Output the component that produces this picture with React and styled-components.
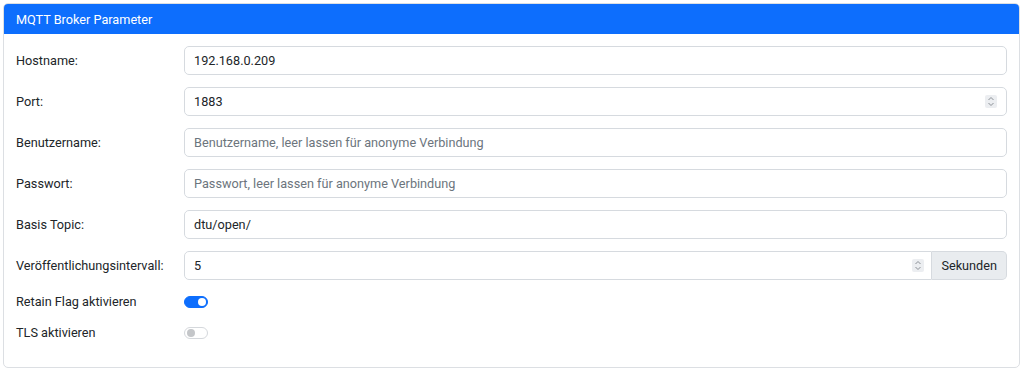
import React from "react";
import styled, { createGlobalStyle } from "styled-components";

const Global = createGlobalStyle`
  html, body { margin: 0; padding: 0; background: #fff; }
  body { font-family: Roboto, "Noto Sans", sans-serif; color: #212529; }
  * { box-sizing: border-box; }
`;

const Page = styled.div`
  padding: 3px 4px 4px 3px;
`;

const Card = styled.section`
  border: 1px solid #dcdfe3;
  border-radius: 5px;
  overflow: hidden;
`;

const Header = styled.header`
  background: #0d6efd;
  color: #fff;
  font-size: 12.7px;
  height: 30px;
  display: flex;
  align-items: center;
  padding: 0 12px;
`;

const Body = styled.div`
  padding: 12px 12px 13px 12px;
  display: flex;
  flex-direction: column;
`;

const Row = styled.div`
  display: grid;
  grid-template-columns: 168px 1fr;
  align-items: center;
  margin-bottom: 12px;
  min-height: ${(p) => (p.$switch ? "19px" : "29px")};
`;

const Label = styled.label`
  font-size: 12.7px;
  color: #212529;
`;

const Group = styled.div`
  display: flex;
  position: relative;
`;

const Input = styled.input`
  flex: 1;
  min-width: 0;
  height: 29px;
  border: 1px solid #d6dadf;
  border-radius: ${(p) => (p.$joined ? "5px 0 0 5px" : "5px")};
  padding: 0 9px;
  font: inherit;
  font-size: 12.7px;
  color: #212529;
  background: #fff;
  outline: none;
  &::placeholder { color: #6c757d; opacity: 1; }
`;

const Addon = styled.span`
  display: flex;
  align-items: center;
  height: 29px;
  padding: 0 9px;
  background: #e9ecef;
  border: 1px solid #d6dadf;
  border-left: none;
  border-radius: 0 5px 5px 0;
  font-size: 12.7px;
  color: #212529;
`;

const Spinner = styled.span`
  position: absolute;
  right: ${(p) => (p.$offset ? "83px" : "10px")};
  top: 8px;
  width: 12px;
  height: 13px;
  border-radius: 2px;
  background: #eceef1;
  display: flex;
  align-items: center;
  justify-content: center;
`;

const Switch = styled.span`
  width: 24px;
  height: 12px;
  border-radius: 6px;
  border: 1px solid ${(p) => (p.$on ? "#0d6efd" : "#d5d8dc")};
  background: ${(p) => (p.$on ? "#0d6efd" : "#fff")};
  display: flex;
  align-items: center;
  justify-content: ${(p) => (p.$on ? "flex-end" : "flex-start")};
  padding: 0 1.5px;
`;

const Knob = styled.span`
  width: 8px;
  height: 8px;
  border-radius: 50%;
  background: ${(p) => (p.$on ? "#fff" : "#c4c6c9")};
`;

const SpinIcon = () => (
  <svg width="8" height="11" viewBox="0 0 8 11" fill="none" stroke="#8a8f95" strokeWidth="1">
    <path d="M1.5 4 L4 1.5 L6.5 4" />
    <path d="M1.5 7 L4 9.5 L6.5 7" />
  </svg>
);

function TextRow({ label, value, placeholder, spin, addon }) {
  return (
    <Row>
      <Label>{label}</Label>
      <Group>
        <Input $joined={!!addon} defaultValue={value} placeholder={placeholder} />
        {spin && (
          <Spinner $offset={!!addon}>
            <SpinIcon />
          </Spinner>
        )}
        {addon && <Addon>{addon}</Addon>}
      </Group>
    </Row>
  );
}

function SwitchRow({ label, on }) {
  return (
    <Row $switch>
      <Label>{label}</Label>
      <Switch $on={on}>
        <Knob $on={on} />
      </Switch>
    </Row>
  );
}

export default function App() {
  return (
    <Page>
      <Global />
      <Card>
        <Header>MQTT Broker Parameter</Header>
        <Body>
          <TextRow label="Hostname:" value="192.168.0.209" />
          <TextRow label="Port:" value="1883" spin />
          <TextRow label="Benutzername:" placeholder="Benutzername, leer lassen für anonyme Verbindung" />
          <TextRow label="Passwort:" placeholder="Passwort, leer lassen für anonyme Verbindung" />
          <TextRow label="Basis Topic:" value="dtu/open/" />
          <TextRow label="Veröffentlichungsintervall:" value="5" spin addon="Sekunden" />
          <SwitchRow label="Retain Flag aktivieren" on />
          <SwitchRow label="TLS aktivieren" />
        </Body>
      </Card>
    </Page>
  );
}
